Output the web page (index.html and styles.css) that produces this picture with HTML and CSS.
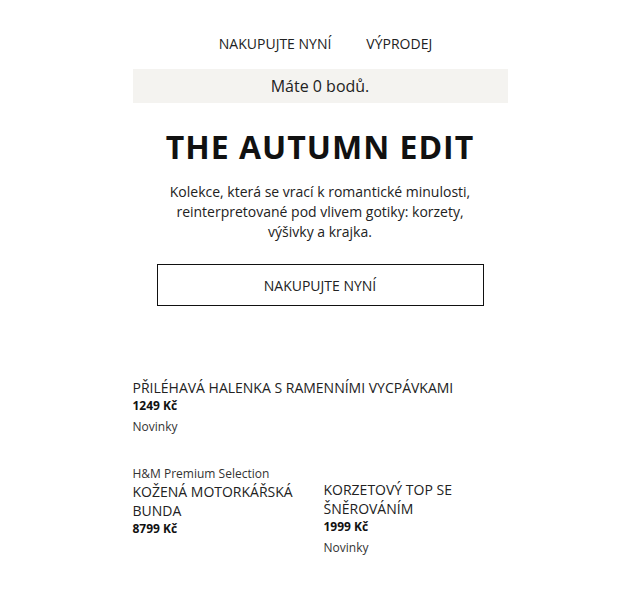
FILE: index.html
```html
<!DOCTYPE html>
<html lang="cs">
<head>
<meta charset="utf-8">
<link rel="stylesheet" href="styles.css">
</head>
<body>
<div class="page">
  <nav class="nav">
    <a class="nav-link">NAKUPUJTE NYNÍ</a>
    <a class="nav-link">VÝPRODEJ</a>
  </nav>
  <div class="points">Máte 0 bodů.</div>
  <section class="hero">
    <h1 class="hero-title">THE AUTUMN EDIT</h1>
    <p class="hero-text">Kolekce, která se vrací k romantické minulosti, reinterpretované pod vlivem gotiky: korzety, výšivky a krajka.</p>
    <a class="hero-btn">NAKUPUJTE NYNÍ</a>
  </section>
  <section class="products">
    <div class="product product-wide">
      <div class="p-title">PŘILÉHAVÁ HALENKA S RAMENNÍMI VYCPÁVKAMI</div>
      <div class="p-price">1249 Kč</div>
      <div class="p-tag">Novinky</div>
    </div>
    <div class="grid">
      <div class="product">
        <div class="p-brand">H&amp;M Premium Selection</div>
        <div class="p-title">KOŽENÁ MOTORKÁŘSKÁ BUNDA</div>
        <div class="p-price">8799 Kč</div>
      </div>
      <div class="product product-right">
        <div class="p-title">KORZETOVÝ TOP SE ŠNĚROVÁNÍM</div>
        <div class="p-price">1999 Kč</div>
        <div class="p-tag">Novinky</div>
      </div>
    </div>
  </section>
</div>
</body>
</html>
```
FILE: styles.css
```css
* { box-sizing: border-box; }
body {
  margin: 0;
  background: #fff;
  color: #222;
  font-family: "Open Sans", "Liberation Sans", sans-serif;
}
.page {
  width: 375px;
  margin: 0 auto;
  padding-top: 34px;
}
.nav {
  display: flex;
  justify-content: center;
  gap: 35px;
  font-size: 14px;
  line-height: 20px;
  padding-left: 11px;
}
.nav-link { color: #222; }
.points {
  margin-top: 15px;
  height: 34px;
  background: #f4f3f0;
  display: flex;
  align-items: center;
  justify-content: center;
  font-size: 16px;
  color: #222;
}
.hero {
  display: flex;
  flex-direction: column;
  align-items: center;
  text-align: center;
}
.hero-title {
  margin: 24px 0 0;
  font-size: 32px;
  line-height: 40px;
  font-weight: 700;
  letter-spacing: 1px;
  color: #111;
}
.hero-text {
  margin: 15px 0 0;
  width: 320px;
  font-size: 14px;
  line-height: 20px;
}
.hero-btn {
  margin-top: 22px;
  width: 327px;
  height: 42px;
  border: 1px solid #111;
  display: flex;
  align-items: center;
  justify-content: center;
  font-size: 14px;
  color: #222;
}
.products {
  margin-top: 72px;
}
.p-title {
  font-size: 14px;
  line-height: 19px;
  color: #222;
}
.p-price {
  font-size: 12px;
  line-height: 18px;
  font-weight: 700;
  color: #111;
}
.p-tag {
  margin-top: 3px;
  font-size: 12px;
  line-height: 18px;
  color: #333;
}
.p-brand {
  font-size: 12px;
  line-height: 16px;
  color: #333;
}
.grid {
  margin-top: 30px;
  display: grid;
  grid-template-columns: 183px 1fr;
  gap: 8px;
}
.product-right { padding-top: 14px; }
```
